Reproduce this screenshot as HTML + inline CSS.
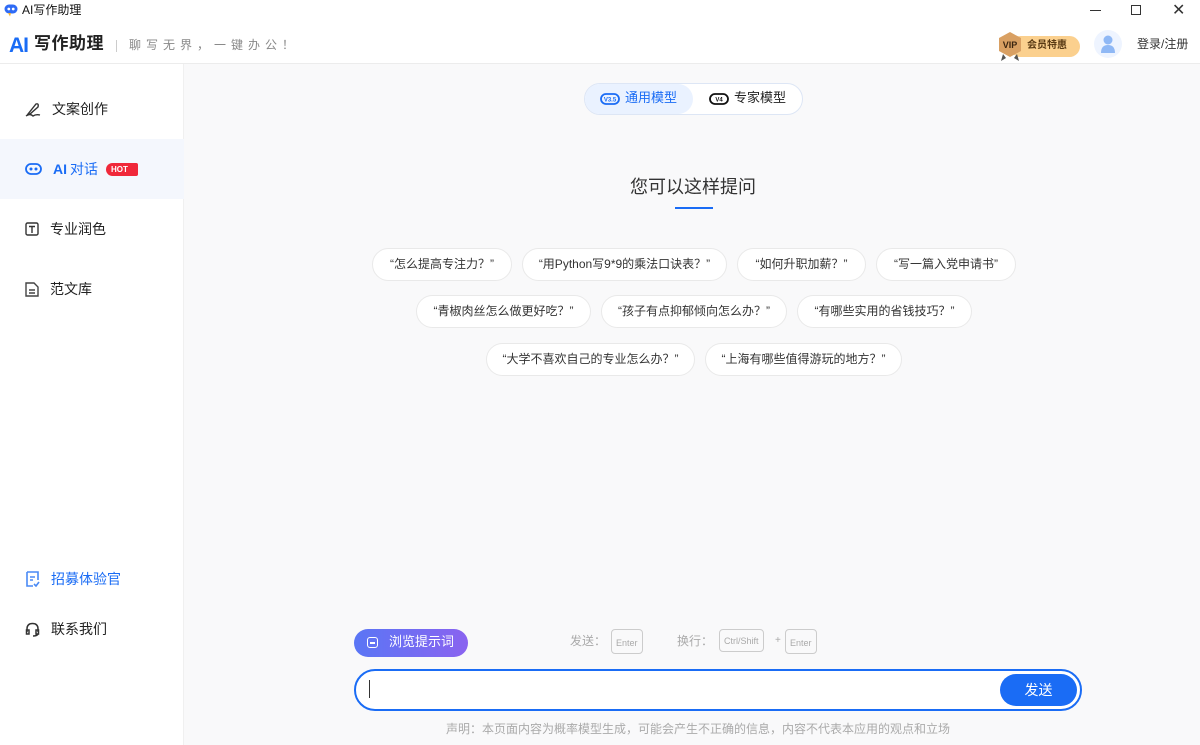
<!DOCTYPE html>
<html><head><meta charset="utf-8"><style>
*{margin:0;padding:0;box-sizing:border-box}
body{width:1200px;height:745px;overflow:hidden;background:#f9f9fa;font-family:"Liberation Sans","Noto Sans CJK SC",sans-serif;color:#222;position:relative;line-height:1.2}
.abs{position:absolute}
.titlebar{left:0;top:0;width:1200px;height:22px;background:#fff}
.header{left:0;top:22px;width:1200px;height:42px;background:#fff;border-bottom:1px solid #ececec}
.side{left:0;top:64px;width:184px;height:681px;background:#fff;border-right:1px solid #f0f0f0}
.nav{position:absolute;left:0;width:184px;height:60px;display:flex;align-items:center;padding-left:25px;font-size:14px;color:#222}
.nav svg{margin-right:11px}
.chip{position:absolute;height:33px;border:1px solid #e9e9e9;border-radius:17px;background:#fff;font-size:12px;color:#333;display:flex;align-items:center;justify-content:center}
.key{display:inline-block;border:1px solid #ccc;border-radius:4px;font-size:9px;color:#aaa;padding:8px 4px 5px;line-height:10px}
</style></head><body>
<div class="abs titlebar">
 <svg class="abs" style="left:4px;top:4px" width="14" height="13" viewBox="0 0 14 13"><rect x="0.5" y="0.5" width="13" height="9" rx="4.5" fill="#2f6bf5"/><circle cx="4.8" cy="5" r="1.4" fill="#fff"/><circle cx="9.2" cy="5" r="1.4" fill="#fff"/><path d="M4 9 L6 12.5 L7 9Z" fill="#f2b233"/></svg>
 <div class="abs" style="left:22px;top:3px;font-size:12px;color:#111">AI写作助理</div>
 <div class="abs" style="left:1090px;top:10px;width:11px;height:1px;background:#333"></div>
 <div class="abs" style="left:1131px;top:5px;width:10px;height:10px;border:1px solid #333"></div>
 <div class="abs" style="left:1172px;top:1px;font-size:16px;color:#333">✕</div>
</div>
<div class="abs header">
 <div class="abs" style="left:9px;top:11px;font-size:21px;font-weight:bold;color:#1a6cf5;font-family:'Liberation Sans',sans-serif;letter-spacing:-1px">AI</div>
 <div class="abs" style="left:34px;top:10px;font-size:17px;font-weight:bold;color:#222;letter-spacing:0.5px;font-family:'Noto Sans CJK SC',sans-serif">写作助理</div>
 <div class="abs" style="left:116px;top:18px;width:1px;height:12px;background:#ccc"></div>
 <div class="abs" style="left:129px;top:16px;font-size:12px;color:#888;letter-spacing:5px">聊写无界，一键办公！</div>
 <div class="abs" style="left:1010px;top:14px;width:70px;height:21px;border-radius:11px;background:#fbd08e;font-size:10px;color:#5a3a14;font-weight:bold;padding:4px 0 0 17px">会员特惠</div>
 <svg class="abs" style="left:996px;top:8px" width="28" height="32" viewBox="0 0 28 32"><path d="M7 24 L5 31 L10 28Z M21 24 L23 31 L18 28Z" fill="#555"/><polygon points="14,2 25,8 25,21 14,27 3,21 3,8" fill="#d9a063"/><text x="14" y="18" font-size="9" font-weight="bold" text-anchor="middle" fill="#3a2410" font-family="Liberation Sans">VIP</text></svg>
 <div class="abs" style="left:1094px;top:8px;width:28px;height:28px;border-radius:50%;background:#eef4ff"></div>
 <svg class="abs" style="left:1100px;top:12px" width="16" height="20" viewBox="0 0 16 20"><circle cx="8" cy="6" r="4.5" fill="#8fb8f5"/><path d="M1 19 Q1 11 8 11 Q15 11 15 19Z" fill="#8fb8f5"/></svg>
 <div class="abs" style="left:1137px;top:15px;font-size:12px;color:#333">登录/注册</div>
</div>
<div class="abs side">
 <div class="nav" style="top:15px"><svg width="16" height="16" viewBox="0 0 16 16" fill="none" stroke="#333" stroke-width="1.4"><path d="M3 13 L11 3 Q14 2 13 6 L5 13Z M1 15 Q5 12 8 15 Q11 13 15 14"/></svg>文案创作</div>
 <div class="nav" style="top:75px;background:#f4f7fd;color:#1a6cf5;font-weight:bold"><svg width="17" height="14" viewBox="0 0 17 14"><rect x="1" y="2" width="15" height="10" rx="5" fill="none" stroke="#1a6cf5" stroke-width="1.8"/><circle cx="6" cy="7" r="1.5" fill="#1a6cf5"/><circle cx="11" cy="7" r="1.5" fill="#1a6cf5"/></svg><span style="font-family:'Liberation Sans';font-weight:bold;margin-right:3px">AI</span><span style="font-weight:normal">对话</span><span style="display:inline-block;margin-left:8px;background:#f0283a;color:#fff;font-size:8px;font-weight:bold;padding:2px 10px 2px 5px;border-radius:7px 2px 2px 7px;line-height:9px">HOT</span></div>
 <div class="nav" style="top:135px"><svg width="14" height="14" viewBox="0 0 14 14" fill="none" stroke="#333" stroke-width="1.4"><rect x="1" y="1" width="12" height="12" rx="1.5"/><path d="M4 4.5 H10 M7 4.5 V11"/></svg>专业润色</div>
 <div class="nav" style="top:195px"><svg width="14" height="15" viewBox="0 0 14 15" fill="none" stroke="#444" stroke-width="1.4"><path d="M1 1 H9 L13 5 V14 H1Z M4 8 H10 M4 11 H10"/></svg>范文库</div>
 <div class="nav" style="top:485px;color:#1a6cf5"><svg width="15" height="16" viewBox="0 0 15 16" fill="none" stroke="#4a8af5" stroke-width="1.6"><path d="M2 1 H13 V9 M2 1 V15 H8 M5 6 H10 M5 9 H8 M9 13 L11 15 L14 11"/></svg>招募体验官</div>
 <div class="nav" style="top:535px"><svg width="15" height="15" viewBox="0 0 15 15" fill="none" stroke="#333" stroke-width="1.5"><path d="M2 10 V7 Q2 1.5 7.5 1.5 Q13 1.5 13 7 V10 M1.5 8 H4 V12 H1.5Z M11 8 H13.5 V12 H11Z M13 12 Q12 14 8 14"/></svg>联系我们</div>
</div>
<div class="abs" style="left:584px;top:83px;width:219px;height:32px;border:1px solid #dde6f5;border-radius:16px;background:#fff"></div>
<div class="abs" style="left:585px;top:84px;width:108px;height:30px;border-radius:15px;background:#eaf2ff"></div>
<svg class="abs" style="left:600px;top:93px" width="20" height="13" viewBox="0 0 20 13"><rect x="1" y="1" width="18" height="10" rx="5" fill="none" stroke="#1a6cf5" stroke-width="1.8"/><text x="10" y="8.5" font-size="6" text-anchor="middle" fill="#1a6cf5" font-family="Liberation Sans" font-weight="bold">V3.5</text></svg>
<div class="abs" style="left:625px;top:90px;font-size:13px;color:#1a6cf5">通用模型</div>
<svg class="abs" style="left:709px;top:93px" width="20" height="13" viewBox="0 0 20 13"><rect x="1" y="1" width="18" height="10" rx="5" fill="none" stroke="#111" stroke-width="1.8"/><text x="10" y="8.5" font-size="6" text-anchor="middle" fill="#111" font-family="Liberation Sans" font-weight="bold">V4</text></svg>
<div class="abs" style="left:734px;top:90px;font-size:13px;color:#222">专家模型</div>
<div class="abs" style="left:600px;top:177px;width:186px;text-align:center;font-size:18px;color:#333">您可以这样提问</div>
<div class="abs" style="left:675px;top:207px;width:38px;height:2px;background:#1a6cf5"></div>
<div class="chip" style="left:372px;top:248px;width:140px">“怎么提高专注力？”</div>
<div class="chip" style="left:522px;top:248px;width:205px">“用Python写9*9的乘法口诀表？”</div>
<div class="chip" style="left:737px;top:248px;width:129px">“如何升职加薪？”</div>
<div class="chip" style="left:876px;top:248px;width:140px">“写一篇入党申请书”</div>
<div class="chip" style="left:416px;top:295px;width:175px">“青椒肉丝怎么做更好吃？”</div>
<div class="chip" style="left:601px;top:295px;width:186px">“孩子有点抑郁倾向怎么办？”</div>
<div class="chip" style="left:797px;top:295px;width:175px">“有哪些实用的省钱技巧？”</div>
<div class="chip" style="left:486px;top:343px;width:209px">“大学不喜欢自己的专业怎么办？”</div>
<div class="chip" style="left:705px;top:343px;width:197px">“上海有哪些值得游玩的地方？”</div>
<div class="abs" style="left:354px;top:629px;width:114px;height:28px;border-radius:14px;background:linear-gradient(90deg,#5a76f5,#8a63f0);color:#fff;font-size:13px;padding:5px 0 0 35px">浏览提示词</div>
<div class="abs" style="left:367px;top:637px;width:11px;height:11px;border:1.5px solid #fff;border-radius:3px"></div>
<div class="abs" style="left:370px;top:642px;width:5px;height:1.5px;background:#fff"></div>
<div class="abs" style="left:570px;top:634px;font-size:12px;color:#aaa">发送：</div>
<div class="abs" style="left:611px;top:629px"><span class="key">Enter</span></div>
<div class="abs" style="left:677px;top:634px;font-size:12px;color:#aaa">换行：</div>
<div class="abs" style="left:719px;top:629px"><span class="key" style="padding-top:6px;padding-bottom:5px">Ctrl/Shift</span></div>
<div class="abs" style="left:775px;top:635px;font-size:10px;color:#aaa">+</div>
<div class="abs" style="left:785px;top:629px"><span class="key">Enter</span></div>
<div class="abs" style="left:354px;top:669px;width:728px;height:42px;border:2px solid #1a6cf5;border-radius:21px;background:#fff"></div>
<div class="abs" style="left:369px;top:680px;width:1px;height:18px;background:#333"></div>
<div class="abs" style="left:1000px;top:674px;width:77px;height:32px;border-radius:16px;background:#1a6cf5;color:#fff;font-size:14px;text-align:center;line-height:32px">发送</div>
<div class="abs" style="left:354px;top:722px;width:688px;text-align:center;font-size:12px;color:#aaa">声明：本页面内容为概率模型生成，可能会产生不正确的信息，内容不代表本应用的观点和立场</div>
</body></html>
